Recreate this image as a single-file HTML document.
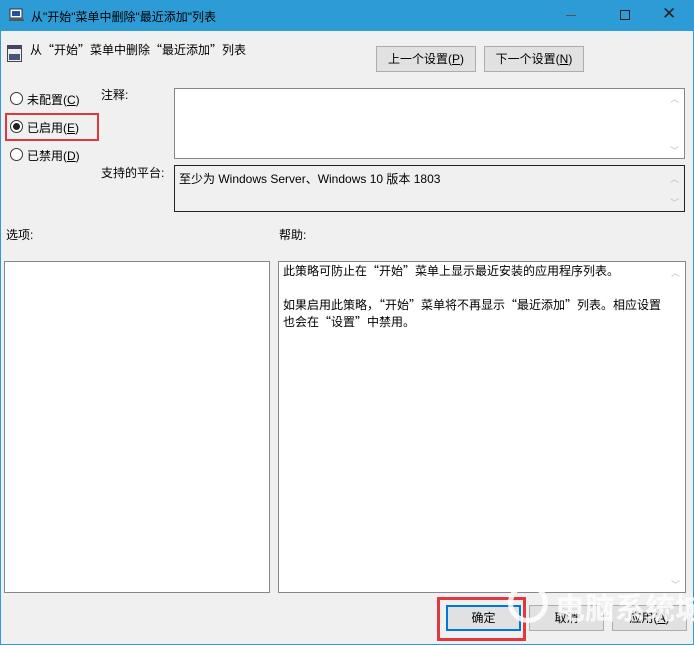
<!DOCTYPE html>
<html><head><meta charset="utf-8"><style>
*{margin:0;padding:0;box-sizing:border-box}
body{width:694px;height:645px;background:#f0f0f0;font-family:"Liberation Sans","Microsoft YaHei","Noto Sans CJK SC",sans-serif;font-size:12px;color:#000;position:relative;overflow:hidden}
.a{position:absolute;white-space:nowrap}
.c{font-family:"Noto Sans CJK SC",sans-serif}
.tb{left:0;top:0;width:694px;height:31px;background:#2c9bd6}
.win{left:0;top:31px;width:694px;height:614px;border-left:1px solid #2c9bd6;border-right:1px solid #2c9bd6;border-bottom:1px solid #2c9bd6}
.btn{background:#e1e1e1;border:1px solid #adadad;text-align:center;line-height:24px}
.box{background:#fff;border:1px solid #828790}
.sb{width:17px;color:#bbb;font-size:9px;text-align:center}
.r{width:13px;height:13px;border:1px solid #333;border-radius:50%;background:#fff}
</style></head><body>
<div class="a tb"></div>
<div class="a win"></div>
<svg class="a" style="left:9px;top:8px" width="16" height="14"><rect x="1" y="1" width="12" height="9" fill="#fff" stroke="#333"/><rect x="3" y="3" width="8" height="5" fill="#2050a0"/><rect x="0" y="11" width="15" height="2" fill="#555"/></svg>
<div class="a" style="left:31px;top:8px;font-size:12px;color:#000">从"开始"菜单中删除"最近添加"列表</div>
<div class="a" style="left:566px;top:15px;width:10px;height:1px;background:#555"></div>
<div class="a" style="left:620px;top:10px;width:10px;height:10px;border:1px solid #222"></div>
<div class="a" style="left:662px;top:4px;font-size:17px;color:#222">✕</div>
<svg class="a" style="left:7px;top:45px" width="15" height="17"><rect x="0.5" y="0.5" width="14" height="16" fill="#eee" stroke="#445"/><rect x="1" y="1" width="13" height="3" fill="#446"/><rect x="2" y="9" width="11" height="6" fill="#457"/></svg>
<div class="a c" style="left:30px;top:41px">从“开始”菜单中删除“最近添加”列表</div>
<div class="a btn" style="left:376px;top:46px;width:100px;height:26px">上一个设置(<u>P</u>)</div>
<div class="a btn" style="left:484px;top:46px;width:100px;height:26px">下一个设置(<u>N</u>)</div>
<div class="a r" style="left:10px;top:92px"></div><div class="a" style="left:27px;top:91px">未配置(<u>C</u>)</div>
<div class="a r" style="left:10px;top:120px"></div><div class="a" style="left:13px;top:123px;width:7px;height:7px;border-radius:50%;background:#222"></div><div class="a" style="left:27px;top:119px">已启用(<u>E</u>)</div>
<div class="a r" style="left:10px;top:148px"></div><div class="a" style="left:27px;top:147px">已禁用(<u>D</u>)</div>
<div class="a" style="left:5px;top:113px;width:94px;height:28px;border:2px solid #e0383c"></div>
<div class="a" style="left:101px;top:86px">注释:</div>
<div class="a box" style="left:174px;top:88px;width:511px;height:71px"></div>
<div class="a sb" style="left:666px;top:92px">︿</div><div class="a sb" style="left:666px;top:144px">﹀</div>
<div class="a" style="left:101px;top:164px">支持的平台:</div>
<div class="a" style="left:174px;top:165px;width:511px;height:47px;border:1px solid #222;background:#f0f0f0"></div>
<div class="a" style="left:179px;top:170px">至少为 Windows Server、Windows 10 版本 1803</div>
<div class="a sb" style="left:666px;top:172px">︿</div><div class="a sb" style="left:666px;top:196px">﹀</div>
<div class="a" style="left:6px;top:226px">选项:</div>
<div class="a" style="left:279px;top:226px">帮助:</div>
<div class="a box" style="left:4px;top:261px;width:266px;height:332px"></div>
<div class="a box" style="left:278px;top:261px;width:408px;height:332px"></div>
<div class="a sb" style="left:667px;top:266px">︿</div><div class="a sb" style="left:667px;top:578px">﹀</div>
<div class="a c" style="left:283px;top:262px;line-height:17px">此策略可防止在“开始”菜单上显示最近安装的应用程序列表。<br><br>如果启用此策略，“开始”菜单将不再显示“最近添加”列表。相应设置<br>也会在“设置”中禁用。</div>
<div class="a btn" style="left:446px;top:605px;width:75px;height:26px;border:2px solid #0078d7;line-height:22px">确定</div>
<div class="a btn" style="left:529px;top:605px;width:75px;height:26px">取消</div>
<div class="a btn" style="left:612px;top:605px;width:75px;height:26px">应用(<u>A</u>)</div>
<div class="a" style="left:437px;top:597px;width:89px;height:44px;border:3px solid #e0383c"></div>
<div class="a" style="left:508px;top:583px;width:40px;height:40px;border-radius:50%;border:5px solid rgba(255,255,255,.85)"></div>
<div class="a" style="left:555px;top:584px;font-size:30px;font-weight:bold;color:rgba(255,255,255,.8)">电脑系统城</div>
</body></html>
